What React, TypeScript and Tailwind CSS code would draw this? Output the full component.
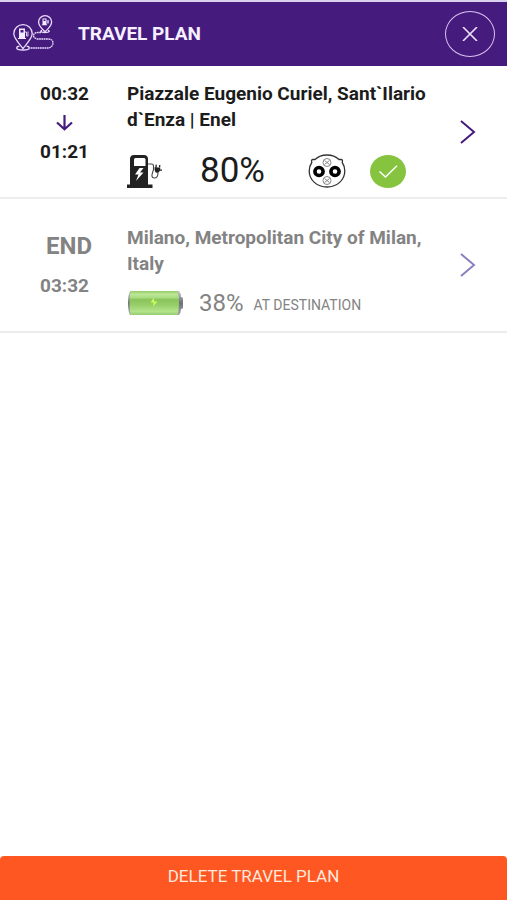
import type { ReactNode } from "react";

function RouteIcon() {
  return (
    <svg width="42" height="38" viewBox="0 0 42 38" fill="none" stroke="#e9dcfb" strokeWidth="1.3" aria-hidden="true">
      <path d="M10 33.5C7 29.500 .8 23.500 .8 18.500a9.200 8.900 0 0 1 18.400 0C19.200 23.500 13 29.500 10 33.500Z" />
      <path d="M6.500 31.200c-2.300.3-2.800 1-2.800 1.800 0 1.100 2.500 2 6.300 2s6.300-.9 6.300-2c0-.8-.5-1.500-2.800-1.800" />
      <path d="M32 16.800c-2.500-2.600-6.400-5.600-6.400-9.800a6.500 6.300 0 0 1 13 0c0 4.200-4.100 7.200-6.600 9.800Z" />
      <path d="M29 15.500c-2 .3-2 2 3 2s5-1.700 3-2" />
      <path d="M28 17.500h-3c-3 0-4.500 1.500-4.500 3s1.500 3.500 4.500 3.500h10c3.500 0 5 1.700 5 4s-2 5-5 5H17" strokeDasharray="1.800 .5" />
      <path d="M6 13.500h6v9.500h1v1H5v-1h1Z" fill="#f3ebff" stroke="none" />
      <path d="M7.500 15h3v2.500h-3Z" fill="#461b7e" stroke="none" />
      <path d="M12 17h1.500v4h1.500v-4.500" strokeWidth=".9" />
      <path d="M29.500 3.500h4v6h.7v.8h-5.400v-.8h.7Z" fill="#f3ebff" stroke="none" />
      <path d="M30.500 4.500h2V6h-2Z" fill="#461b7e" stroke="none" />
      <path d="M33.500 5.500h1v2.700h1V5" strokeWidth=".7" />
    </svg>
  );
}

function ChargerIcon() {
  return (
    <svg width="35" height="33" viewBox="0 0 35 33" fill="none" aria-hidden="true">
      <path d="M3 29.500V4c0-2.500 1.500-4 4-4h10c2.500 0 4 1.500 4 4v25.500h4.500V33H0v-3.500Z" fill="#222" />
      <path d="M8.500 3h8.500q1.500 0 1.500 1.500V11H7V4.500Q7 3 8.500 3Z" fill="#fff" />
      <path d="m12.500 13-4.500 6.500h3.500L9 26l7.500-8.500H13l3.500-4.500Z" fill="#fff" />
      <path d="M21 9h3.500q2 0 2 2v3.500L25 19.500q-.5 3.500 2.500 3.500c3 0 3.500-2 3.500-5.500" stroke="#444" strokeWidth="1.100" />
      <path d="m27.700 12 5.600.8c0 3.200-1.200 5-3 5-2.100 0-3.100-2.300-2.600-5.800Z" fill="#222" />
      <path d="m29 12 .3-2.300M32.500 12.500l.3-2.500M32.500 15.200H35" stroke="#222" strokeWidth="1.300" />
    </svg>
  );
}

function ConnectorIcon() {
  return (
    <svg width="38" height="34" viewBox="0 0 38 34" fill="none" stroke="#333" aria-hidden="true">
      <path d="M7 5.500C10 2.500 14.500 1 19 1s9 1.500 12 4.500l2-.1c1.200.2 1.700 1 1.400 2.300l-.2.800C36 11 36.800 14 36.800 17c0 9-7.800 16-17.800 16S1.200 26 1.200 17c0-3 .8-6 2.600-8.500l-.2-.8C3.300 6.400 3.800 5.600 5 5.400Z" strokeWidth="1.300" />
      <ellipse cx="11" cy="17.500" rx="4.100" ry="4" stroke="#000" strokeWidth="3.600" />
      <ellipse cx="27" cy="17.500" rx="4.100" ry="4" stroke="#000" strokeWidth="3.600" />
      <circle cx="19" cy="8.500" r="4" stroke="#888" />
      <circle cx="19" cy="26.500" r="4" stroke="#888" />
      <path d="m16.500 6.500 5 4m0-4-5 4M16.500 24.500l5 4m0-4-5 4" stroke="#888" />
    </svg>
  );
}

function CheckIcon() {
  return (
    <svg width="36" height="33" viewBox="0 0 36 33" fill="none" role="img" aria-label="Available">
      <ellipse cx="18" cy="16.500" rx="18" ry="16.500" fill="#86c440" />
      <path d="m9.500 16.500 6 5.500L27 10.800" stroke="#fff" strokeWidth="1.500" />
    </svg>
  );
}

function BatteryIcon() {
  return (
    <svg width="56" height="26" viewBox="0 0 56 26" aria-hidden="true">
      <defs>
        <linearGradient id="cell" x1="0" y1="0" x2="0" y2="1">
          <stop offset="0" stopColor="#96cc66" />
          <stop offset=".14" stopColor="#bce698" />
          <stop offset=".28" stopColor="#a9dc80" />
          <stop offset=".36" stopColor="#8ac25c" />
          <stop offset=".58" stopColor="#96ce68" />
          <stop offset=".85" stopColor="#b4e48c" />
          <stop offset="1" stopColor="#96cc70" />
        </linearGradient>
        <linearGradient id="cap" x1="0" y1="0" x2="0" y2="1">
          <stop offset="0" stopColor="#c8c8c8" />
          <stop offset=".5" stopColor="#6c7176" />
          <stop offset="1" stopColor="#aaa" />
        </linearGradient>
      </defs>
      <path d="M3 1h49q2 2 2 6h.5q1.500 0 1.500 2v8q0 2-1.500 2H54q0 4-2 6H3Q1 21 1 13T3 1Z" fill="url(#cap)" />
      <path d="M3.500 1h47q1.500 5 1.500 12t-1.500 12h-47Q2.500 20 2.500 13T3.500 1Z" fill="url(#cell)" />
      <path d="m26.500 8-3 4.500h3l-.5 4 4.500-5h-3Z" fill="#c8ff55" />
    </svg>
  );
}

type StopProps = { when: ReactNode; place: string; muted?: boolean; children: ReactNode };

function Stop({ when, place, muted, children }: StopProps) {
  return (
    <li className="border-b-2 border-[#ececec]">
      <a href="#details" className={`flex items-center ${muted ? "text-[#838383]" : ""}`}>
        <div className={`flex min-w-0 flex-1 ${muted ? "pt-[26px] pb-3.5" : "pt-[15px] pb-2"}`}>
          <div className="w-[127px] shrink-0 pl-10 text-[19px] leading-[26px] font-bold">{when}</div>
          <div className="min-w-0 flex-1">
            <h2 className="text-[19px] leading-[26px] font-bold">{place}</h2>
            {children}
          </div>
        </div>
        <div className="flex w-[60px] shrink-0 pl-3">
          <svg width="18" height="24" viewBox="0 0 18 24" fill="none" stroke={muted ? "#8c7fbb" : "#461b7e"} strokeWidth="2" aria-hidden="true">
            <path d="m2 1 13 11L2 23" />
          </svg>
        </div>
      </a>
    </li>
  );
}

export default function App() {
  return (
    <div className="flex min-h-screen flex-col bg-white font-[Roboto,sans-serif] text-[#1c1c1c]">
      <header className="flex h-[66px] items-center border-t-2 border-[#d9d0ee] bg-[#461b7e] pr-3 pl-[13px] text-white">
        <RouteIcon />
        <h1 className="ml-[23px] flex-1 text-[19px] leading-6 font-bold text-[#f6f0ff]">TRAVEL PLAN</h1>
        <button type="button" aria-label="Close" className="flex h-[46px] w-[50px] items-center justify-center rounded-[50%] border border-[#d9c4f2]">
          <svg width="16" height="14" viewBox="0 0 16 14" fill="none" stroke="#eee0ff" strokeWidth="1.600" aria-hidden="true">
            <path d="m1 0 14 14M15 0 1 14" />
          </svg>
        </button>
      </header>

      <main className="flex-1">
        <ol>
          <Stop
            place="Piazzale Eugenio Curiel, Sant`Ilario d`Enza | Enel"
            when={
              <>
                <time className="block">00:32</time>
                <svg width="17" height="16" viewBox="0 0 17 16" fill="none" stroke="#461b7e" strokeWidth="2.200" className="my-2 ml-4" aria-hidden="true">
                  <path d="M8.500 0v14M1 7.500l7.500 6.700L16 7.500" />
                </svg>
                <time className="block">01:21</time>
              </>
            }
          >
            <div className="mt-5 flex items-center">
              <ChargerIcon />
              <span className="w-[108px] pl-[38px] text-[35px] leading-9">80%</span>
              <span className="ml-[38px]"><ConnectorIcon /></span>
              <span className="ml-6"><CheckIcon /></span>
            </div>
          </Stop>
          <Stop
            muted
            place="Milano, Metropolitan City of Milan, Italy"
            when={
              <>
                <span className="block pt-2 pl-1.5 text-2xl leading-[26px]">END</span>
                <time className="mt-3.5 block">03:32</time>
              </>
            }
          >
            <div className="mt-3 flex items-center">
              <BatteryIcon />
              <span className="ml-4 text-2xl leading-7">38%</span>
              <span className="ml-2.5 pt-1 text-sm">AT DESTINATION</span>
            </div>
          </Stop>
        </ol>
      </main>

      <button type="button" className="h-11 w-full rounded-t-sm bg-[#ff5722] pb-0.5 text-[17px] text-[#ffe9df]">
        DELETE TRAVEL PLAN
      </button>
    </div>
  );
}
